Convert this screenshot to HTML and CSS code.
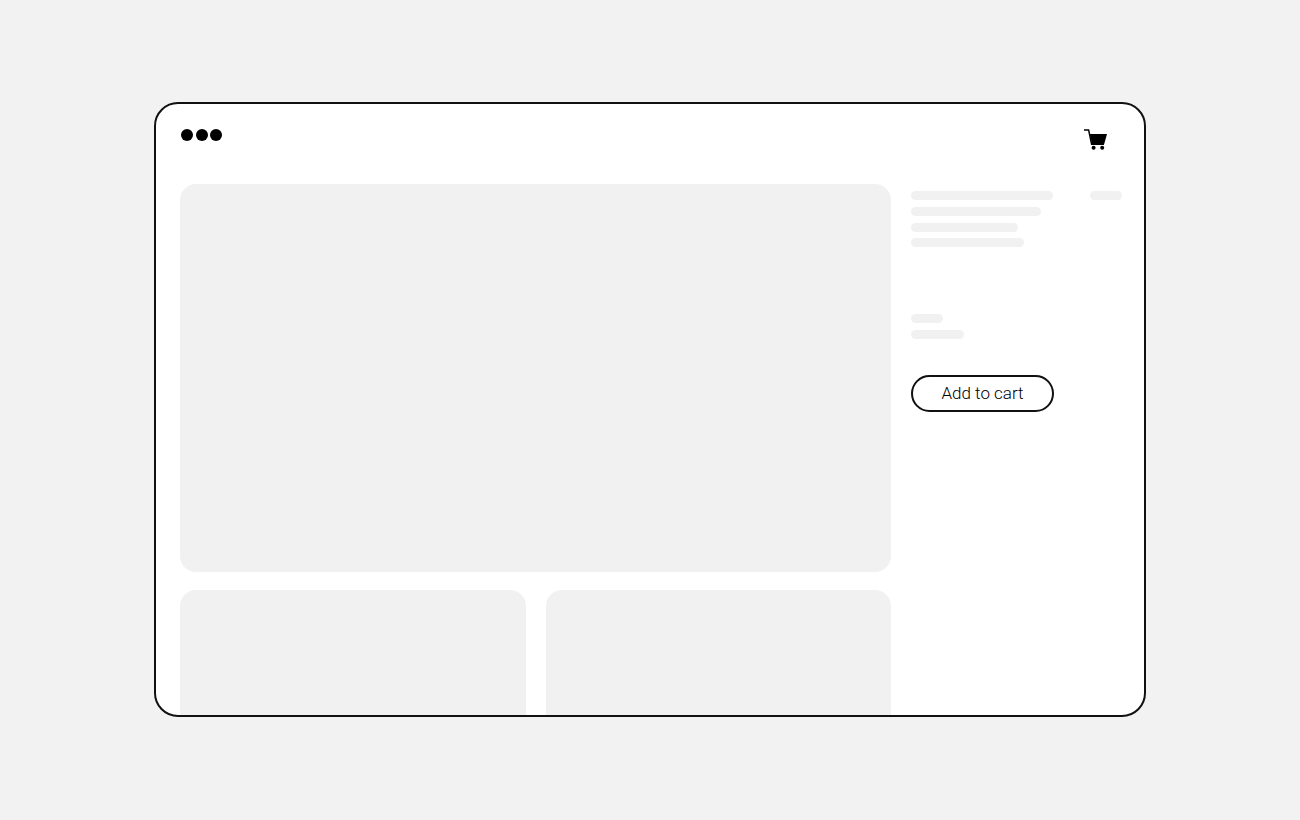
FILE: index.html
```html
<!DOCTYPE html>
<html lang="en">
<head>
    <meta charset="UTF-8">
    <meta name="viewport" content="width=device-width, initial-scale=1.0">
    <title>Product page</title>
    <link rel="stylesheet" href="styles.css">
</head>
<body>
    <div class="window">
        <header class="top-bar">
            <div class="dots">
                <span class="dot"></span>
                <span class="dot"></span>
                <span class="dot"></span>
            </div>
            <svg class="cart-icon" width="23" height="21" viewBox="0 0 23 21">
                <path d="M0 0.9H4.6L7.6 15.2H20" fill="none" stroke="#000" stroke-width="1.5"/>
                <path d="M5.8 5H23L20.2 15H8Z" fill="#000"/>
                <circle cx="9.6" cy="18.8" r="2" fill="#000"/>
                <circle cx="18.2" cy="18.8" r="2" fill="#000"/>
            </svg>
        </header>

        <div class="content">
            <main class="gallery">
                <div class="photo photo-large"></div>
                <div class="thumbs">
                    <div class="photo photo-small"></div>
                    <div class="photo photo-small"></div>
                </div>
            </main>

            <aside class="details">
                <div class="title-row">
                    <div class="lines">
                        <div class="line line-1"></div>
                        <div class="line line-2"></div>
                        <div class="line line-3"></div>
                        <div class="line line-4"></div>
                    </div>
                    <div class="line price"></div>
                </div>
                <div class="lines options">
                    <div class="line option-1"></div>
                    <div class="line option-2"></div>
                </div>
                <button class="add-btn" type="button">Add to cart</button>
            </aside>
        </div>
    </div>
</body>
</html>
```

FILE: styles.css
```css
/* General Styles */
html, body {
    margin: 0;
    padding: 0;
    height: 100%;
}

body {
    display: flex;
    align-items: center;
    justify-content: center;
    background-color: #f2f2f2;
    font-family: Roboto, Arial, sans-serif;
}

/* Browser window */
.window {
    box-sizing: border-box;
    width: 992px;
    height: 615px;
    margin-bottom: 1px;
    padding: 0 22px 0 24px;
    background-color: #fff;
    border: 2px solid #111;
    border-radius: 24px;
    overflow: hidden;
}

/* Top bar */
.top-bar {
    display: flex;
    justify-content: space-between;
    align-items: flex-start;
    height: 80px;
    padding-top: 25px;
    box-sizing: border-box;
}

.dots {
    display: flex;
    gap: 2.5px;
    margin-left: 1px;
}

.dot {
    width: 12px;
    height: 12px;
    background-color: #000;
    border-radius: 50%;
}

.cart-icon {
    display: block;
    margin-right: 15px;
}

/* Main area */
.content {
    display: flex;
    gap: 20px;
}

.gallery {
    flex: none;
    width: 711px;
}

.photo {
    background-color: #f1f1f1;
    border-radius: 16px;
}

.photo-large {
    height: 388px;
}

.thumbs {
    display: flex;
    gap: 20px;
    margin-top: 18px;
}

.photo-small {
    flex: 1;
    height: 200px;
}

/* Right column */
.details {
    flex: 1;
    padding-top: 7px;
}

.title-row {
    display: flex;
    justify-content: space-between;
}

.lines {
    display: flex;
    flex-direction: column;
    gap: 7px;
}

.line {
    height: 9px;
    background-color: #f1f1f1;
    border-radius: 5px;
}

.line-1 { width: 142px; }
.line-2 { width: 130px; }
.line-3 { width: 107px; }
.line-4 { width: 113px; margin-top: -1px; }
.price { width: 32px; }
.option-1 { width: 32px; }
.option-2 { width: 53px; }

.options {
    margin-top: 67px;
}

/* Add to cart */
.add-btn {
    display: block;
    box-sizing: border-box;
    width: 143px;
    height: 37px;
    margin-top: 36px;
    padding: 0 0 2px;
    background-color: #fff;
    color: #000;
    border: 2px solid #111;
    border-radius: 19px;
    font-family: Roboto, Arial, sans-serif;
    font-size: 17px;
    font-weight: 300;
}
```
